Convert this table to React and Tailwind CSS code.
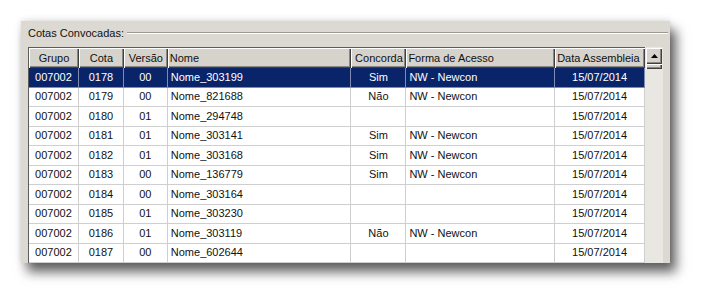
import React from 'react';

const columns = [
    { key: 'grupo', label: 'Grupo', w: 'w-[50px]', head: 'justify-center', cell: 'justify-center' },
    { key: 'cota', label: 'Cota', w: 'w-[45px]', head: 'justify-center', cell: 'justify-center' },
    { key: 'versao', label: 'Versão', w: 'w-[44px]', head: 'justify-center', cell: 'justify-center' },
    { key: 'nome', label: 'Nome', w: 'w-[184px]', head: 'justify-start', cell: 'justify-start' },
    { key: 'concorda', label: 'Concorda', w: 'w-[55px]', head: 'justify-center', cell: 'justify-center' },
    { key: 'forma', label: 'Forma de Acesso', w: 'w-[149px]', head: 'justify-start', cell: 'justify-start' },
    { key: 'data', label: 'Data Assembleia', w: 'w-[90px]', head: 'justify-start', cell: 'justify-center' },
];

const rows = [
    { grupo: '007002', cota: '0178', versao: '00', nome: 'Nome_303199', concorda: 'Sim', forma: 'NW - Newcon', data: '15/07/2014' },
    { grupo: '007002', cota: '0179', versao: '00', nome: 'Nome_821688', concorda: 'Não', forma: 'NW - Newcon', data: '15/07/2014' },
    { grupo: '007002', cota: '0180', versao: '01', nome: 'Nome_294748', concorda: '', forma: '', data: '15/07/2014' },
    { grupo: '007002', cota: '0181', versao: '01', nome: 'Nome_303141', concorda: 'Sim', forma: 'NW - Newcon', data: '15/07/2014' },
    { grupo: '007002', cota: '0182', versao: '01', nome: 'Nome_303168', concorda: 'Sim', forma: 'NW - Newcon', data: '15/07/2014' },
    { grupo: '007002', cota: '0183', versao: '00', nome: 'Nome_136779', concorda: 'Sim', forma: 'NW - Newcon', data: '15/07/2014' },
    { grupo: '007002', cota: '0184', versao: '00', nome: 'Nome_303164', concorda: '', forma: '', data: '15/07/2014' },
    { grupo: '007002', cota: '0185', versao: '01', nome: 'Nome_303230', concorda: '', forma: '', data: '15/07/2014' },
    { grupo: '007002', cota: '0186', versao: '01', nome: 'Nome_303119', concorda: 'Não', forma: 'NW - Newcon', data: '15/07/2014' },
    { grupo: '007002', cota: '0187', versao: '00', nome: 'Nome_602644', concorda: '', forma: '', data: '15/07/2014' },
];

const App = () => {
    return (
        <div className="w-[713px] h-[306px] bg-white pt-[21px] pl-[21px] overflow-hidden text-[11px] leading-none text-[#111]" style={{ fontFamily: '"Liberation Sans", Arial, sans-serif' }}>
            <div className="w-[649px] h-[242px] bg-[#dcd9d2] shadow-[6px_9px_11px_rgba(0,0,0,0.62),0_-1px_6px_rgba(0,0,0,0.12)] flex flex-col">
                {/* group box caption */}
                <div className="h-[26px] flex items-center pl-[7px] pr-[2px] pb-[2px]">
                    <span className="pr-[3px]">Cotas Convocadas:</span>
                    <div className="flex-1 border-t border-[#9b9892] border-b border-b-white" />
                </div>

                <div className="flex ml-[7px] flex-1 min-h-0">
                    {/* grid */}
                    <div className="w-[617px] border-l border-t border-[#5c5c5c] bg-white overflow-hidden">
                        <div className="flex h-[20px] bg-[#d6d3cc]">
                            {columns.map((c) => (
                                <div
                                    key={c.key}
                                    className={`${c.w} flex items-center ${c.head} px-[2px] whitespace-nowrap shadow-[inset_1px_1px_0_#ffffff,inset_-1px_-1px_0_#404040,inset_-2px_-2px_0_#8a8782]`}
                                >
                                    {c.label}
                                </div>
                            ))}
                        </div>
                        {rows.map((r, i) => {
                            const selected = i === 0;
                            return (
                                <div key={r.cota} className={`flex h-[19.5px] ${selected ? 'bg-[#0a246a] text-white' : 'bg-white'}`}>
                                    {columns.map((c) => (
                                        <div
                                            key={c.key}
                                            className={`${c.w} flex items-center ${c.cell} px-[3px] whitespace-nowrap border-r border-b ${selected ? 'border-[#7f8bb0]' : 'border-[#cfcfcf]'}`}
                                        >
                                            {r[c.key]}
                                        </div>
                                    ))}
                                </div>
                            );
                        })}
                    </div>

                    {/* vertical scrollbar */}
                    <div className="w-[18px] bg-[#e9e7e2] flex flex-col pt-[1px] pl-[1px] pr-[1px]">
                        <div className="h-[16px] bg-[#d6d3cc] flex items-center justify-center shadow-[inset_1px_1px_0_#ffffff,inset_-1px_-1px_0_#404040,inset_-2px_-2px_0_#8a8782]">
                            <svg width="7" height="4" viewBox="0 0 7 4">
                                <polygon points="3.5,0 7,4 0,4" fill="#000" />
                            </svg>
                        </div>
                        <div className="h-[5px] bg-[#d6d3cc] shadow-[inset_1px_1px_0_#ffffff,inset_-1px_-1px_0_#404040,inset_-2px_-2px_0_#8a8782]" />
                    </div>
                </div>
            </div>
        </div>
    );
};

export default App;
